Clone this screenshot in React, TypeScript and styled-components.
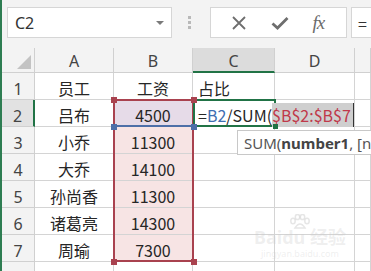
import React from "react";
import styled, { createGlobalStyle } from "styled-components";

const Global = createGlobalStyle`
  html, body { margin: 0; padding: 0; background: #ffffff; }
  body { width: 371px; height: 271px; overflow: hidden; font-family: "Noto Sans CJK SC", "Noto Sans", sans-serif; }
`;

const Frame = styled.div`
  width: 371px;
  height: 271px;
  overflow: hidden;
  position: relative;
  border-left: 2px solid #2e7d52;
  box-sizing: border-box;
`;

const FormulaBar = styled.div`
  height: 48px;
  background: #f3f3f3;
  display: flex;
  align-items: flex-start;
  padding: 7px 0 0 5px;
  box-sizing: border-box;
`;

const NameBox = styled.div`
  width: 165px;
  height: 31px;
  box-sizing: border-box;
  background: #fff;
  border: 1px solid #d6d6d6;
  display: flex;
  align-items: center;
  justify-content: space-between;
  padding: 0 7px 0 7px;
  font-family: "Noto Sans", sans-serif;
  font-size: 16px;
  color: #333;
`;

const Caret = styled.span`
  width: 0;
  height: 0;
  border-left: 4px solid transparent;
  border-right: 4px solid transparent;
  border-top: 4px solid #7a7a7a;
`;

const Grip = styled.div`
  width: 38px;
  height: 31px;
  display: flex;
  align-items: center;
  padding-left: 16px;
  box-sizing: border-box;
`;

const Dots = styled.div`
  display: flex;
  flex-direction: column;
  gap: 2px;
  span { width: 3px; height: 3px; background: #b9b9b9; display: block; }
`;

const FxBox = styled.div`
  width: 137px;
  height: 31px;
  box-sizing: border-box;
  background: #fff;
  border: 1px solid #d6d6d6;
  display: flex;
  align-items: center;
  justify-content: space-around;
  padding: 0 10px 0 8px;
`;

const FxText = styled.span`
  font-family: "Liberation Serif", serif;
  font-style: italic;
  font-size: 19px;
  color: #6b6b6b;
  letter-spacing: -1px;
`;

const FormulaInput = styled.div`
  flex: 1;
  height: 31px;
  margin-left: 4px;
  box-sizing: border-box;
  background: #fff;
  border: 1px solid #d6d6d6;
  border-right: none;
  display: flex;
  align-items: center;
  padding-left: 6px;
  font-size: 16px;
  color: #333;
`;

const GridWrap = styled.div`
  position: relative;
`;

const Grid = styled.div`
  display: grid;
  grid-template-columns: 33px 79px 79px 82px 80px 1fr;
  grid-template-rows: 25px repeat(8, 27px);
`;

const Corner = styled.div`
  background: #f3f3f3;
  border-right: 1px solid #d0d0d0;
  border-bottom: 1px solid #d0d0d0;
  position: relative;
  &::after {
    content: "";
    position: absolute;
    right: 3px;
    bottom: 3px;
    width: 0;
    height: 0;
    border-left: 14px solid transparent;
    border-bottom: 14px solid #c3c3c3;
  }
`;

const ColHead = styled.div<{ $active?: boolean }>`
  background: ${(p) => (p.$active ? "#dcdcdc" : "#f3f3f3")};
  border-right: 1px solid #d0d0d0;
  border-bottom: ${(p) => (p.$active ? "2px solid #217346" : "1px solid #d0d0d0")};
  display: flex;
  align-items: center;
  justify-content: center;
  font-family: "Noto Sans", sans-serif;
  font-size: 16px;
  color: #444;
  box-sizing: border-box;
  padding-top: 2px;
`;

const RowHead = styled.div<{ $active?: boolean }>`
  background: ${(p) => (p.$active ? "#e2e2e2" : "#f3f3f3")};
  border-right: ${(p) => (p.$active ? "2px solid #217346" : "1px solid #d0d0d0")};
  border-bottom: 1px solid #d0d0d0;
  display: flex;
  align-items: center;
  justify-content: center;
  font-family: "Noto Sans", sans-serif;
  font-size: 16px;
  color: #444;
  box-sizing: border-box;
  padding-top: 6px;
`;

const Cell = styled.div<{ $align?: string; $fill?: string; $noRight?: boolean }>`
  background: ${(p) => p.$fill || "#fff"};
  border-right: ${(p) => (p.$noRight ? "1px solid transparent" : "1px solid #d4d4d4")};
  border-bottom: 1px solid #d4d4d4;
  display: flex;
  align-items: center;
  justify-content: ${(p) => p.$align || "center"};
  padding: 3px 5px 0 5px;
  font-size: 16px;
  color: #262626;
  white-space: nowrap;
  box-sizing: border-box;
  overflow: visible;
  min-width: 0;
`;

const FormulaText = styled.span`
  position: relative;
  z-index: 3;
  font-size: 16px;
  color: #262626;
  display: flex;
  align-items: center;
`;

const RefBlue = styled.span`
  color: #3e6fb2;
`;

const RefRed = styled.span`
  color: #c0394a;
  background: #cfcfcf;
  padding-right: 2px;
  border-right: 1px solid #333;
`;

const RangeBox = styled.div<{ $color: string }>`
  position: absolute;
  box-sizing: border-box;
  pointer-events: none;
  z-index: 2;
  border: 2px solid ${(p) => p.$color};
`;

const Handle = styled.span<{ $color: string }>`
  position: absolute;
  width: 6px;
  height: 6px;
  background: ${(p) => p.$color};
  z-index: 4;
`;

const Tip = styled.div`
  position: absolute;
  left: 235px;
  top: 82px;
  height: 23px;
  padding: 0 6px;
  background: #fff;
  border: 1px solid #c8c8c8;
  font-family: "Noto Sans", sans-serif;
  font-size: 15px;
  color: #555;
  display: flex;
  align-items: center;
  white-space: nowrap;
  z-index: 5;
  b { font-weight: 700; color: #444; }
`;

const Watermark = styled.div`
  position: absolute;
  left: 250px;
  top: 166px;
  width: 96px;
  display: flex;
  flex-direction: column;
  align-items: center;
  color: rgba(205, 205, 205, 0.32);
  pointer-events: none;
  z-index: 6;
  font-family: "Noto Sans", "Noto Sans CJK SC", sans-serif;
  line-height: 1;
`;

const WmMain = styled.div`
  font-size: 18px;
  font-weight: 700;
  white-space: nowrap;
  margin-top: -2px;
`;

const WmSub = styled.div`
  font-size: 9px;
  margin-top: 3px;
  white-space: nowrap;
`;

const CloseIcon = () => (
  <svg width="16" height="16" viewBox="0 0 16 16">
    <path d="M2 2 L14 14 M14 2 L2 14" stroke="#6e6e6e" strokeWidth="1.8" fill="none" />
  </svg>
);

const CheckIcon = () => (
  <svg width="18" height="16" viewBox="0 0 18 16">
    <path d="M1.5 8.5 L6.5 13 L16.5 3" stroke="#6e6e6e" strokeWidth="2.8" fill="none" />
  </svg>
);

const Paw = () => (
  <svg width="22" height="16" viewBox="0 0 22 16">
    <g fill="none" stroke="rgba(200,200,200,0.45)" strokeWidth="1.5">
      <ellipse cx="4" cy="7" rx="2.2" ry="2.8" />
      <ellipse cx="8.5" cy="3" rx="2.2" ry="2.6" />
      <ellipse cx="13.5" cy="3" rx="2.2" ry="2.6" />
      <ellipse cx="18" cy="7" rx="2.2" ry="2.8" />
      <path d="M6 14 Q11 6 16 14 Z" />
    </g>
  </svg>
);

const names = ["员工", "吕布", "小乔", "大乔", "孙尚香", "诸葛亮", "周瑜", ""];
const pay = ["工资", "4500", "11300", "14100", "11300", "14300", "7300", ""];
const cols = ["A", "B", "C", "D", ""];

export default function App() {
  const rows = [1, 2, 3, 4, 5, 6, 7, 8];
  return (
    <>
      <Global />
      <Frame>
        <FormulaBar>
          <NameBox>
            <span>C2</span>
            <Caret />
          </NameBox>
          <Grip>
            <Dots>
              <span />
              <span />
              <span />
            </Dots>
          </Grip>
          <FxBox>
            <CloseIcon />
            <CheckIcon />
            <FxText>fx</FxText>
          </FxBox>
          <FormulaInput>=</FormulaInput>
        </FormulaBar>
        <GridWrap>
          <Grid>
            <Corner />
            {cols.map((c, i) => (
              <ColHead key={i} $active={c === "C"}>
                {c}
              </ColHead>
            ))}
            {rows.map((r, ri) => {
              const bFill = ri >= 1 && ri <= 6 ? (ri === 1 ? "#e6dbe8" : "#f7e4e4") : undefined;
              return (
                <React.Fragment key={r}>
                  <RowHead $active={r === 2}>{r}</RowHead>
                  <Cell>{names[ri]}</Cell>
                  <Cell $fill={bFill}>{pay[ri]}</Cell>
                  {r === 1 ? (
                    <Cell $align="flex-start">占比</Cell>
                  ) : r === 2 ? (
                    <Cell $align="flex-start" $noRight>
                      <FormulaText>
                        =<RefBlue>B2</RefBlue>/SUM(<RefRed>$B$2:$B$7</RefRed>
                      </FormulaText>
                    </Cell>
                  ) : (
                    <Cell />
                  )}
                  <Cell />
                  <Cell />
                </React.Fragment>
              );
            })}
          </Grid>
          <RangeBox $color="#a9424f" style={{ left: 111, top: 51, width: 81, height: 163 }} />
          <RangeBox $color="transparent" style={{ left: 111, top: 51, width: 81, height: 28, borderBottomColor: "#4d6fa8" }} />
          <RangeBox $color="#217346" style={{ left: 191, top: 51, width: 83, height: 28 }} />
          <Handle $color="#a9424f" style={{ left: 109, top: 49 }} />
          <Handle $color="#a9424f" style={{ left: 189, top: 49 }} />
          <Handle $color="#a9424f" style={{ left: 109, top: 211 }} />
          <Handle $color="#a9424f" style={{ left: 189, top: 211 }} />
          <Handle $color="#4d6fa8" style={{ left: 109, top: 76 }} />
          <Handle $color="#4d6fa8" style={{ left: 189, top: 76 }} />
          <Handle $color="#217346" style={{ left: 271, top: 76, width: 5, height: 5 }} />
          <Tip>
            SUM(<b>number1</b>, [number2], ...)
          </Tip>
          <Watermark>
            <Paw />
            <WmMain>Baidu 经验</WmMain>
            <WmSub>jingyan.baidu.com</WmSub>
          </Watermark>
        </GridWrap>
      </Frame>
    </>
  );
}
